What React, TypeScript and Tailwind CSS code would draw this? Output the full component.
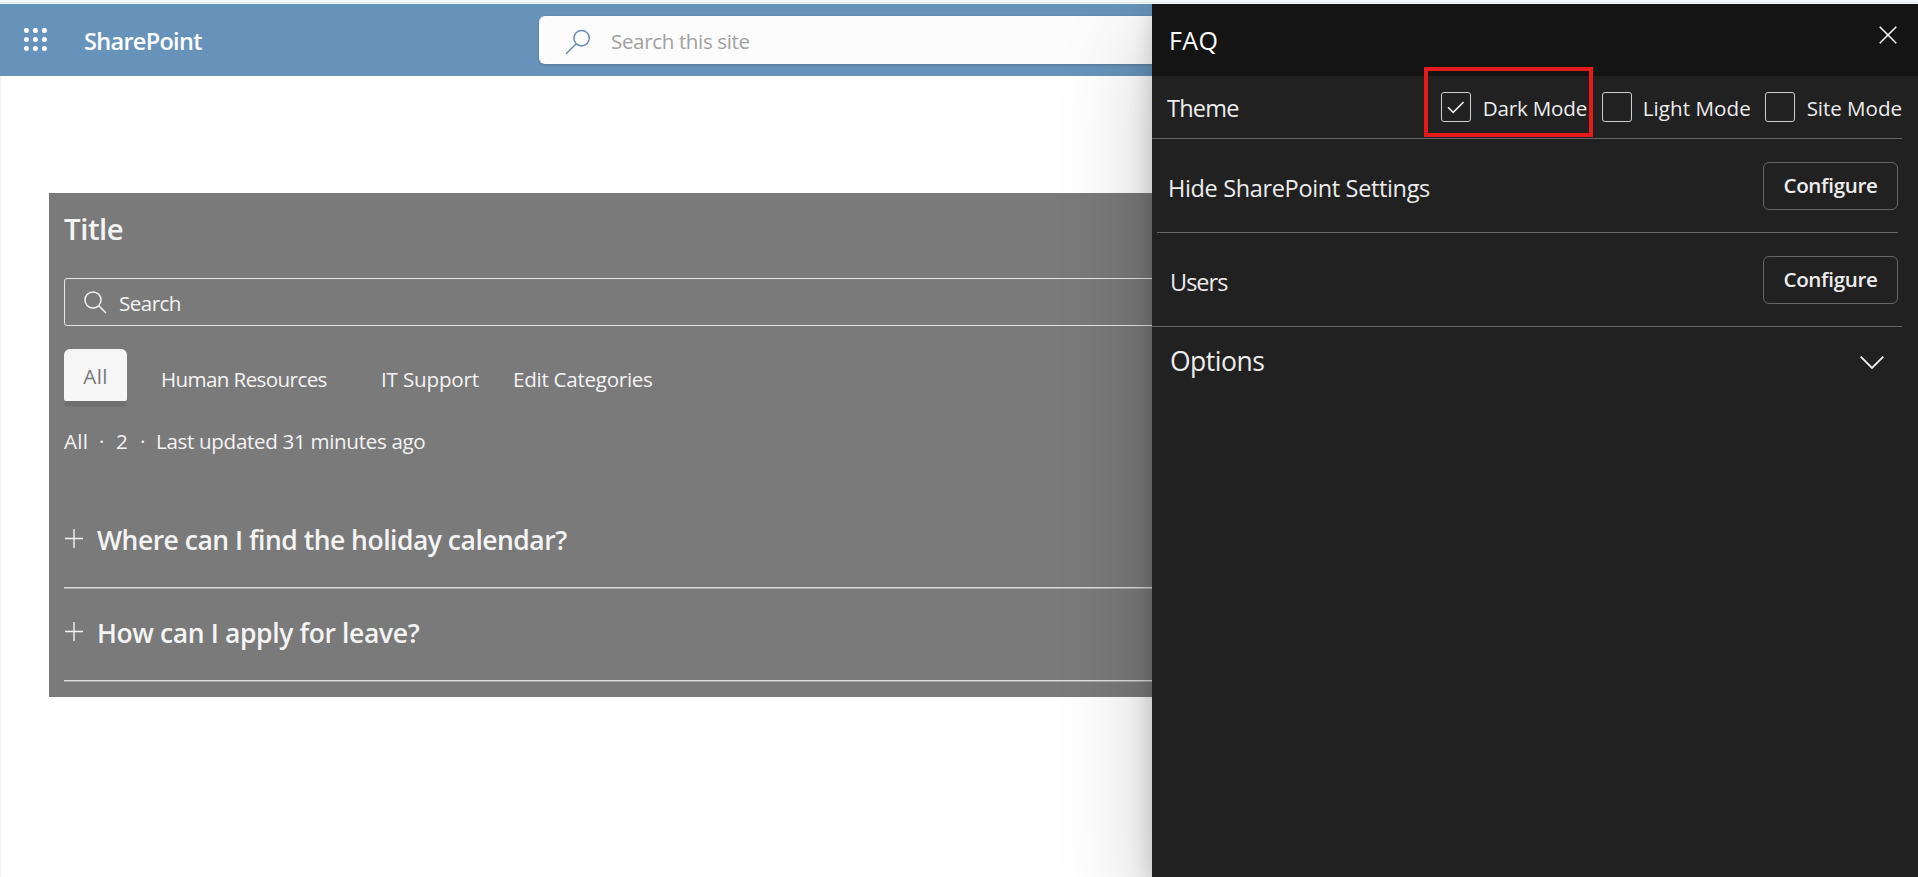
import React, { useState } from "react";

const questions = [
  { text: "Where can I find the holiday calendar?", style: "tracking-[-0.5px]" },
  { text: "How can I apply for leave?", style: "tracking-[-0.38px]" },
];

function WaffleIcon() {
  const steps = [2.4, 11.4, 20.4];
  return (
    <svg width="23" height="23" viewBox="0 0 23 23" fill="#fff">
      {steps.map((y) => steps.map((x) => <circle key={`${x}-${y}`} cx={x} cy={y} r="2.5" />))}
    </svg>
  );
}

function SuiteBar() {
  return (
    <header className="flex h-[72px] shrink-0 bg-[#6793ba]">
      <div className="flex w-[539px] items-center">
        <div className="-mt-0.5 ml-6">
          <WaffleIcon />
        </div>
        <span className="ml-[37px] pt-0.5 text-[23.5px] leading-8 font-semibold tracking-[-0.7px] text-white">
          SharePoint
        </span>
      </div>
      <div className="mt-3 flex h-12 w-[840px] items-center rounded-md bg-[#fcfcfc] shadow-[0_1px_3px_rgba(0,0,0,0.18)]">
        <svg className="mt-[3px] ml-[26px]" width="26" height="26" viewBox="0 0 26 26" fill="none" stroke="#6a8db6" strokeWidth="1.5">
          <circle cx="16.6" cy="9.2" r="7.7" />
          <path d="M11.2 14.7 1 25" />
        </svg>
        <span className="ml-[20px] pt-0.5 text-[20.6px] leading-7 tracking-[-0.38px] text-[#a3a19f]">Search this site</span>
      </div>
    </header>
  );
}

function FaqCard() {
  return (
    <section className="mt-[117px] mr-12 ml-[49px] h-[504px] bg-[#7a7a7a] px-[15px] text-[#f4f4f4]">
      <h2 className="pt-4 text-[29.4px] leading-10 font-semibold tracking-[-0.45px]">Title</h2>
      <div className="mt-[29px] flex h-12 items-center rounded-[3px] border border-[#e6e6e6]">
        <svg className="ml-[19px]" width="23" height="23" viewBox="0 0 23 23" fill="none" stroke="#f4f4f4" strokeWidth="1.5">
          <circle cx="9" cy="9" r="8" />
          <path d="M14.8 14.8 22 22" />
        </svg>
        <span className="ml-[12px] pt-0.5 text-[20.6px] leading-7 tracking-[-0.55px]">Search</span>
      </div>
      <nav className="mt-[23px] flex h-[52px] items-center text-[20.6px] leading-7 whitespace-nowrap">
        <button className="h-[52px] w-[63px] rounded-md rounded-b-[2px] bg-[#f6f6f6] pt-0.5 tracking-[0.3px] text-[#777777] shadow-[0_6px_0_-0.5px_#6f6f6f]">
          All
        </button>
        <span className="w-[219px] pt-2 pl-[34px] tracking-[-0.62px]">Human Resources</span>
        <span className="w-[130px] pt-2 pl-[35px] tracking-[-0.18px]">IT Support</span>
        <span className="pt-2 pl-[37px] tracking-[-0.28px]">Edit Categories</span>
      </nav>
      <p className="mt-[26px] flex text-[20.6px] leading-7">
        <span className="w-[35px] tracking-[0.3px]">All</span>
        <span className="w-[17px]">·</span>
        <span className="w-[24px]">2</span>
        <span className="w-[16px]">·</span>
        <span className="tracking-[-0.33px]">Last updated 31 minutes ago</span>
      </p>
      <div className="mt-[40px]">
        {questions.map((q) => (
          <div key={q.text} className="flex h-[93px] border-b border-[#dedede] pt-[25px] shadow-[0_1px_0_#a9a9a9]">
            <svg className="mt-[9px] ml-px shrink-0" width="19" height="19" viewBox="0 0 19 19" stroke="#f4f4f4" strokeWidth="1.4">
              <path d="M9 0v19M0 9.5h18" />
            </svg>
            <span className={`ml-[13px] text-[26.5px] leading-10 font-semibold ${q.style}`}>{q.text}</span>
          </div>
        ))}
      </div>
    </section>
  );
}

function ThemeOption(props: {
  label: string;
  checked: boolean;
  highlighted?: boolean;
  className: string;
  labelClass: string;
  onSelect: () => void;
}) {
  return (
    <button className={`relative flex items-center ${props.className}`} onClick={props.onSelect}>
      <span className="flex size-[30px] shrink-0 items-center justify-center rounded-[3px] border border-[#cfcfcf]">
        {props.checked && (
          <svg width="18" height="13" viewBox="0 0 18 13" fill="none" stroke="#f0f0f0" strokeWidth="1.5">
            <path d="M1 6.2 6.2 11.4 16.6 1" />
          </svg>
        )}
      </span>
      <span className={`pt-0.5 text-[20.6px] leading-7 whitespace-nowrap ${props.labelClass}`}>{props.label}</span>
      {props.highlighted && (
        <span className="pointer-events-none absolute -top-[25px] -left-[17px] h-[70px] w-[169px] border-4 border-[#e61a1a]" />
      )}
    </button>
  );
}

function SettingRow({ label, className, labelClass }: { label: string; className: string; labelClass: string }) {
  return (
    <div className={`flex h-[94px] items-center justify-between border-b border-[#666666] pt-px ${className}`}>
      <span className={`pt-[3px] text-[23.5px] leading-8 ${labelClass}`}>{label}</span>
      <button className="h-12 w-[135px] rounded-md border border-[#666666] pb-0.5 text-[20.6px] leading-7 font-semibold tracking-[-0.33px]">
        Configure
      </button>
    </div>
  );
}

function SettingsPanel() {
  const [theme, setTheme] = useState("dark");
  return (
    <aside className="absolute top-0 right-0 h-full w-[766px] bg-[#212121] text-[#ededed] shadow-[0_38px_86px_rgba(0,0,0,0.22),0_7px_22px_rgba(0,0,0,0.18)]">
      <div className="flex h-[72px] justify-between bg-[#141414] text-white">
        <h1 className="pt-5 pl-[17px] text-[25px] leading-8 tracking-[0.4px]">FAQ</h1>
        <svg className="mt-[22px] mr-[21px]" width="18" height="18" viewBox="0 0 18 18" stroke="#fff" strokeWidth="1.5">
          <path d="M.7.7l16.6 16.6M17.3.7.7 17.3" />
        </svg>
      </div>
      <div className="mr-4 flex h-[63px] items-center border-b border-[#666666]">
        <span className="w-[289px] pt-0.5 pl-[15px] text-[23.5px] leading-8 tracking-[-0.75px]">Theme</span>
        <ThemeOption label="Dark Mode" checked={theme === "dark"} highlighted className="z-10 w-[161px]" labelClass="ml-[12px] tracking-[-0.2px]" onSelect={() => setTheme("dark")} />
        <ThemeOption label="Light Mode" checked={theme === "light"} className="w-[163px]" labelClass="ml-[11px] tracking-[0.05px]" onSelect={() => setTheme("light")} />
        <ThemeOption label="Site Mode" checked={theme === "site"} className="" labelClass="ml-[12px] tracking-[-0.05px]" onSelect={() => setTheme("site")} />
      </div>
      <SettingRow label="Hide SharePoint Settings" className="mr-5 ml-[5px] pl-[11px]" labelClass="tracking-[-0.35px]" />
      <SettingRow label="Users" className="mr-4 pr-1 pl-[18px]" labelClass="tracking-[-1px]" />
      <div className="mr-[34px] flex h-[68px] items-center justify-between pl-[18px]">
        <span className="text-[26.5px] leading-9 tracking-[-0.5px]">Options</span>
        <svg className="mt-[3px]" width="24" height="13" viewBox="0 0 24 13" fill="none" stroke="#f0f0f0" strokeWidth="1.8">
          <path d="M.7.7 12 12 23.3.7" />
        </svg>
      </div>
    </aside>
  );
}

export default function App() {
  return (
    <div className="flex h-[877px] w-full flex-col overflow-hidden bg-white font-['Open_Sans','Noto_Sans',sans-serif]">
      <div className="h-1 shrink-0 border-b border-[#f1fafb] bg-[#f3f8fb]">
        <div className="mt-0.5 h-px bg-[#dbe6ea]" />
      </div>
      <div className="relative flex flex-1 flex-col overflow-hidden">
        <SuiteBar />
        <main className="flex-1 border-l border-[#f0f0f0]">
          <div className="-ml-px">
            <FaqCard />
          </div>
        </main>
        <SettingsPanel />
      </div>
    </div>
  );
}
